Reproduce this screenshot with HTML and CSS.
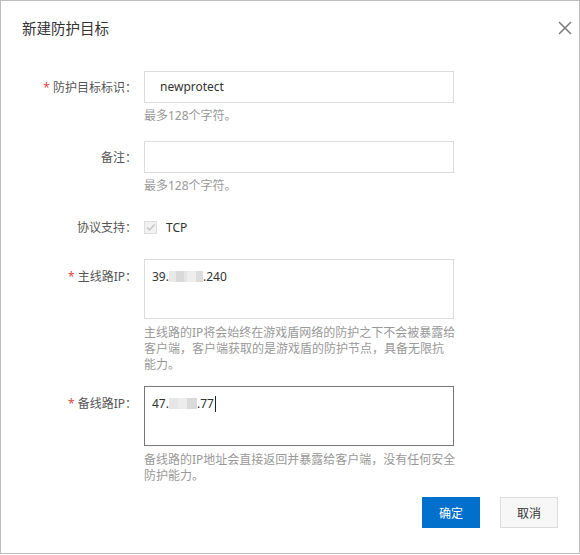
FILE: index.html
```html
<!DOCTYPE html>
<html lang="zh-CN">
<head>
<meta charset="utf-8">
<title>新建防护目标</title>
<link rel="stylesheet" href="styles.css">
</head>
<body>
<div class="dialog">
  <div class="header">
    <div class="title">新建防护目标</div>
    <svg class="close" width="14" height="14" viewBox="0 0 14 14"><path d="M1 1L13 13M13 1L1 13" stroke="#7a7a7a" stroke-width="1.5" fill="none"/></svg>
  </div>
  <div class="form">
    <div class="item item-a">
      <div class="label"><span class="req">*</span>防护目标标识：</div>
      <div class="control">
        <div class="input input-name">newprotect</div>
        <div class="help">最多128个字符。</div>
      </div>
    </div>
    <div class="item item-a">
      <div class="label">备注：</div>
      <div class="control">
        <div class="input"></div>
        <div class="help">最多128个字符。</div>
      </div>
    </div>
    <div class="item item-c">
      <div class="label label-c">协议支持：</div>
      <div class="control check-row">
        <span class="checkbox"><svg width="11" height="11" viewBox="0 0 11 11"><path d="M2 5.5L4.5 8L9.5 2.5" stroke="#c4c4c4" stroke-width="1.4" fill="none"/></svg></span>
        <span class="check-text">TCP</span>
      </div>
    </div>
    <div class="item item-t">
      <div class="label label-t"><span class="req">*</span>主线路IP：</div>
      <div class="control">
        <div class="textarea">39.<span class="blur blur-a"></span>.240</div>
        <div class="help help-multi">主线路的IP将会始终在游戏盾网络的防护之下不会被暴露给<br>客户端，客户端获取的是游戏盾的防护节点，具备无限抗<br>能力。</div>
      </div>
    </div>
    <div class="item item-t2">
      <div class="label label-t"><span class="req">*</span>备线路IP：</div>
      <div class="control">
        <div class="textarea focused">47.<span class="blur blur-b"></span>.77<span class="caret"></span></div>
        <div class="help help-multi">备线路的IP地址会直接返回并暴露给客户端，没有任何安全<br>防护能力。</div>
      </div>
    </div>
  </div>
  <div class="footer">
    <button class="btn btn-primary">确定</button>
    <button class="btn btn-normal">取消</button>
  </div>
</div>
</body>
</html>
```

FILE: styles.css
```css
* { box-sizing: border-box; }
html, body { margin: 0; padding: 0; background: #fff; }
body {
  font-family: "Noto Sans", "Noto Sans CJK SC", sans-serif;
  font-size: 12px;
  color: #333;
}
.dialog {
  width: 580px;
  height: 554px;
  border: 1px solid #bdbdbd;
  background: #fff;
  display: flex;
  flex-direction: column;
}
.header {
  display: flex;
  justify-content: space-between;
  align-items: center;
  padding: 16px 7px 0 21px;
  height: 37px;
}
.title {
  font-size: 14.5px;
  line-height: 20px;
  color: #333;
}
.close { display: block; }
.form {
  margin-top: 33px;
}
.item {
  display: grid;
  grid-template-columns: 136px 310px;
  column-gap: 7px;
}
.item-a { margin-bottom: 17px; }
.item-c { margin-bottom: 16px; height: 32px; }
.item-t { margin-bottom: 13px; }
.label {
  text-align: right;
  color: #555;
  line-height: 18px;
  padding-top: 8px;
  white-space: nowrap;
}
.label-t { padding-top: 9px; }
.label-c { padding-top: 8px; }
.req {
  color: #e5473c;
  margin-right: 3px;
  font-size: 12px;
}
.input {
  height: 32px;
  border: 1px solid #dcdcdc;
  line-height: 30px;
  padding: 0 15px;
  color: #333;
}
.help {
  color: #999;
  margin-top: 5px;
  line-height: 16px;
}
.help-multi {
  margin-top: 6px;
  margin-right: -10px;
  line-height: 16px;
  white-space: nowrap;
}
.check-row {
  display: flex;
  align-items: center;
  height: 32px;
}
.checkbox {
  width: 13px;
  height: 13px;
  border: 1px solid #dedede;
  background: #f2f2f2;
  display: flex;
  align-items: center;
  justify-content: center;
}
.check-text {
  margin-left: 9px;
  color: #333;
}
.textarea {
  height: 60px;
  border: 1px solid #dcdcdc;
  padding: 8px 7px;
  line-height: 18px;
  color: #333;
}
.textarea.focused { border-color: #777; }
.blur {
  display: inline-block;
  height: 11px;
  vertical-align: -1px;
}
.blur-a {
  width: 34px;
  background: linear-gradient(to right, #e9e9e9 0 7px, #d9d9d9 7px 15px, #e4e4e4 15px 18px, #eeeeee 18px 27px, #dddddd 27px 34px);
}
.blur-b {
  width: 28px;
  background: linear-gradient(to right, #e6e6e6 0 9px, #ececec 9px 18px, #dadada 18px 28px);
}
.caret {
  display: inline-block;
  width: 1px;
  height: 16px;
  background: #222;
  vertical-align: -4px;
  margin-left: 1px;
}
.footer {
  margin-top: auto;
  margin-bottom: 25px;
  display: flex;
  justify-content: flex-end;
  gap: 20px;
  padding-right: 21px;
}
.btn {
  width: 58px;
  height: 31px;
  font-family: inherit;
  font-size: 12px;
  border: 1px solid transparent;
  padding: 0;
  cursor: pointer;
}
.btn-primary {
  background: #0070cc;
  color: #fff;
  border-color: #0070cc;
}
.btn-normal {
  background: #f7f7f7;
  color: #333;
  border-color: #dcdcdc;
}
```
